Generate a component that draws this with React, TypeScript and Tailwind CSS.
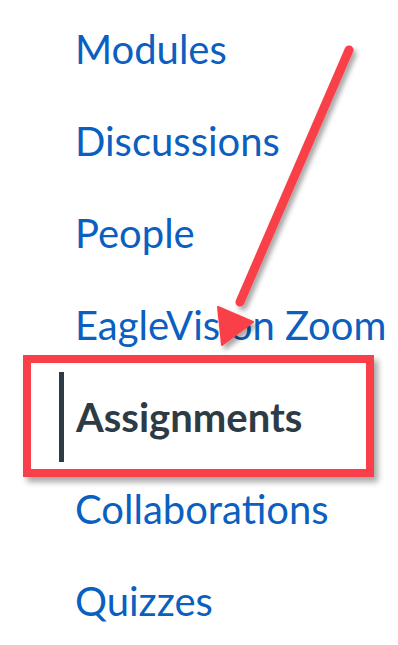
import React from "react";

const items = [
  { label: "Modules" },
  { label: "Discussions" },
  { label: "People" },
  { label: "EagleVision Zoom" },
  { label: "Assignments", active: true },
  { label: "Collaborations" },
  { label: "Quizzes" },
];

const NavItem = ({ label, active }: { label: string; active?: boolean }) => {
  if (active) {
    return (
      <li className="h-[92px] flex items-center">
        <div className="ml-[59px] h-[90px] border-l-[5px] border-[#2d3b45] pl-[12px] flex items-center">
          <span className="text-[40px] font-bold text-[#2d3b45] leading-none">
            {label}
          </span>
        </div>
      </li>
    );
  }
  return (
    <li className="h-[92px] flex items-center pl-[75px]">
      <span className="text-[40px] text-[#0a5fc0] leading-none">{label}</span>
    </li>
  );
};

export default function App() {
  return (
    <div
      className="relative w-[398px] h-[645px] bg-white overflow-hidden"
      style={{ fontFamily: "Lato, 'Open Sans', sans-serif" }}
    >
      <ul className="pt-[3px] flex flex-col">
        {items.map((item) => (
          <NavItem key={item.label} label={item.label} active={item.active} />
        ))}
      </ul>

      {/* annotation: highlight box */}
      <div className="absolute left-[23px] top-[355px] w-[351px] h-[122px] border-[8px] border-[#f9404a] shadow-[4px_5px_6px_rgba(0,0,0,0.35)]" />

      {/* annotation: arrow */}
      <svg
        className="absolute left-0 top-0"
        width="398"
        height="645"
        viewBox="0 0 398 645"
      >
        <defs>
          <filter id="sh" x="-20%" y="-20%" width="140%" height="140%">
            <feDropShadow dx="3" dy="4" stdDeviation="2.5" floodColor="#000" floodOpacity="0.35" />
          </filter>
        </defs>
        <g filter="url(#sh)" fill="#f9404a" stroke="#f9404a">
          <line x1="349" y1="50" x2="240" y2="302" strokeWidth="9" strokeLinecap="round" />
          <polygon points="218,307 253,322 222,345" strokeWidth="2" strokeLinejoin="round" />
        </g>
      </svg>
    </div>
  );
}
